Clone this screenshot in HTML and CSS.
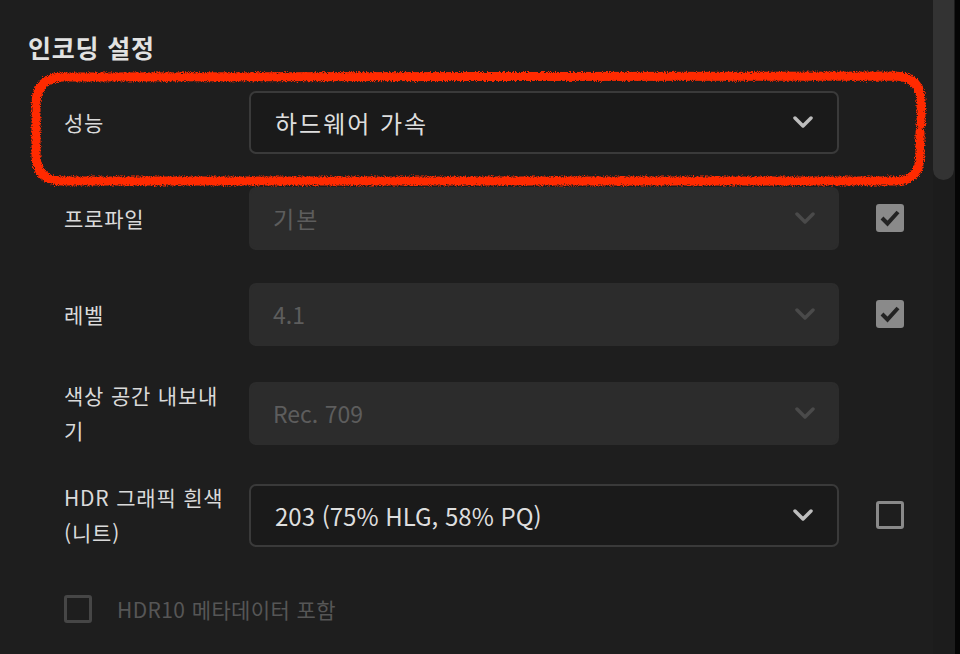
FILE: index.html
```html
<!DOCTYPE html>
<html lang="ko">
<head>
    <meta charset="UTF-8">
    <title>인코딩 설정</title>
    <link rel="stylesheet" href="styles.css">
</head>
<body>
    <div class="window">
        <div class="panel">
            <h2 class="section-title">인코딩 설정</h2>

            <div class="row">
                <div class="label">성능</div>
                <div class="select">
                    <span class="value ko">하드웨어 가속</span>
                    <svg class="chevron" viewBox="0 0 20 12"><path d="M2 2 L10 10 L18 2"/></svg>
                </div>
                <div class="check-slot"></div>
            </div>

            <div class="row">
                <div class="label">프로파일</div>
                <div class="select disabled">
                    <span class="value ko">기본</span>
                    <svg class="chevron" viewBox="0 0 20 12"><path d="M2 2 L10 10 L18 2"/></svg>
                </div>
                <div class="check-slot">
                    <span class="checkbox checked">
                        <svg viewBox="0 0 28 28"><path d="M6 14 L11.5 19.5 L22 8"/></svg>
                    </span>
                </div>
            </div>

            <div class="row">
                <div class="label">레벨</div>
                <div class="select disabled">
                    <span class="value">4.1</span>
                    <svg class="chevron" viewBox="0 0 20 12"><path d="M2 2 L10 10 L18 2"/></svg>
                </div>
                <div class="check-slot">
                    <span class="checkbox checked">
                        <svg viewBox="0 0 28 28"><path d="M6 14 L11.5 19.5 L22 8"/></svg>
                    </span>
                </div>
            </div>

            <div class="row">
                <div class="label">색상 공간 내보내기</div>
                <div class="select disabled">
                    <span class="value">Rec. 709</span>
                    <svg class="chevron" viewBox="0 0 20 12"><path d="M2 2 L10 10 L18 2"/></svg>
                </div>
                <div class="check-slot"></div>
            </div>

            <div class="row">
                <div class="label">HDR 그래픽 흰색 (니트)</div>
                <div class="select">
                    <span class="value">203 (75% HLG, 58% PQ)</span>
                    <svg class="chevron" viewBox="0 0 20 12"><path d="M2 2 L10 10 L18 2"/></svg>
                </div>
                <div class="check-slot">
                    <span class="checkbox"></span>
                </div>
            </div>

            <div class="option disabled">
                <span class="checkbox"></span>
                <span class="option-text">HDR10 메타데이터 포함</span>
            </div>
        </div>

        <div class="scroll-track">
            <div class="scroll-thumb"></div>
        </div>
        <div class="edge"></div>

        <!-- hand-drawn highlight on top of the first row -->
        <svg class="marker" width="960" height="654" viewBox="0 0 960 654">
            <defs>
                <filter id="rough" x="-5%" y="-20%" width="110%" height="140%">
                    <feTurbulence type="fractalNoise" baseFrequency="0.9" numOctaves="2" seed="3" result="noise"/>
                    <feDisplacementMap in="SourceGraphic" in2="noise" scale="5" xChannelSelector="R" yChannelSelector="G"/>
                </filter>
            </defs>
            <path filter="url(#rough)" d="M920 132 L920 156 Q920 181 895 181 L62 181 Q37 181 36 156 L36 103 Q37 78 62 77 L895 76 Q921 77 921 102 L921 124"/>
        </svg>
    </div>
</body>
</html>
```

FILE: styles.css
```css
* {
    box-sizing: border-box;
    margin: 0;
    padding: 0;
}

html, body {
    width: 100%;
    height: 100%;
    overflow: hidden;
    background-color: #1e1e1e;
}

body {
    font-family: "Noto Sans CJK KR", "Noto Sans", sans-serif;
    color: #d9d9d9;
}

.window {
    position: relative;
    display: flex;
    width: 960px;
    height: 654px;
}

.panel {
    flex: 1;
    padding: 28px 0 0 28px;
}

.section-title {
    font-size: 25px;
    font-weight: 700;
    letter-spacing: 0.8px;
    line-height: 38px;
    color: #e2e2e2;
    margin-bottom: 24px;
}

.row {
    display: flex;
    align-items: center;
    min-height: 64px;
    margin-bottom: 32px;
    padding-left: 36px;
}

.label {
    width: 165px;
    margin-right: 20px;
    font-size: 21px;
    letter-spacing: 0.8px;
    line-height: 35px;
    color: #dadada;
}

.select {
    display: flex;
    align-items: center;
    justify-content: space-between;
    width: 590px;
    height: 63px;
    padding: 0 24px 0 24px;
    border: 2px solid #3a3a3a;
    border-radius: 7px;
    background-color: #1a1a1a;
}

.select .value {
    font-size: 24px;
    color: #dedede;
}

.select .value.ko {
    letter-spacing: 2px;
}

.chevron {
    width: 20px;
    height: 12px;
    fill: none;
    stroke: #bdbdbd;
    stroke-width: 3.5;
    stroke-linecap: round;
    stroke-linejoin: round;
}

.select.disabled {
    border-color: #2c2c2c;
    background-color: #2c2c2c;
    padding-left: 22px;
    padding-right: 22px;
}

.select.disabled .value {
    font-size: 23px;
    color: #5d5d5d;
}

.select.disabled .chevron {
    stroke: #4a4a4a;
}

.check-slot {
    width: 28px;
    margin-left: 37px;
}

.checkbox {
    display: block;
    width: 28px;
    height: 28px;
    border: 3px solid #8a8a8a;
    border-radius: 3px;
}

.checkbox.checked {
    border: none;
    background-color: #8a8a8a;
}

.checkbox svg {
    display: block;
    width: 28px;
    height: 28px;
    fill: none;
    stroke: #232323;
    stroke-width: 4;
    stroke-linecap: butt;
}

.option {
    display: flex;
    align-items: center;
    gap: 25px;
    margin-top: 44px;
    padding-left: 36px;
}

.option.disabled .checkbox {
    border-color: #464646;
}

.option-text {
    font-size: 21px;
    letter-spacing: 0.4px;
    color: #565656;
}

.scroll-track {
    width: 22px;
    background-color: #1c1c1c;
}

.scroll-thumb {
    width: 21px;
    height: 180px;
    background-color: #333333;
    border-radius: 0 0 11px 11px;
}

.edge {
    width: 5px;
    background-color: #050505;
}

.marker {
    position: absolute;
    top: 0;
    left: 0;
    pointer-events: none;
}

.marker path {
    fill: none;
    stroke: #ff2a00;
    stroke-width: 9;
    stroke-linecap: round;
}
```
